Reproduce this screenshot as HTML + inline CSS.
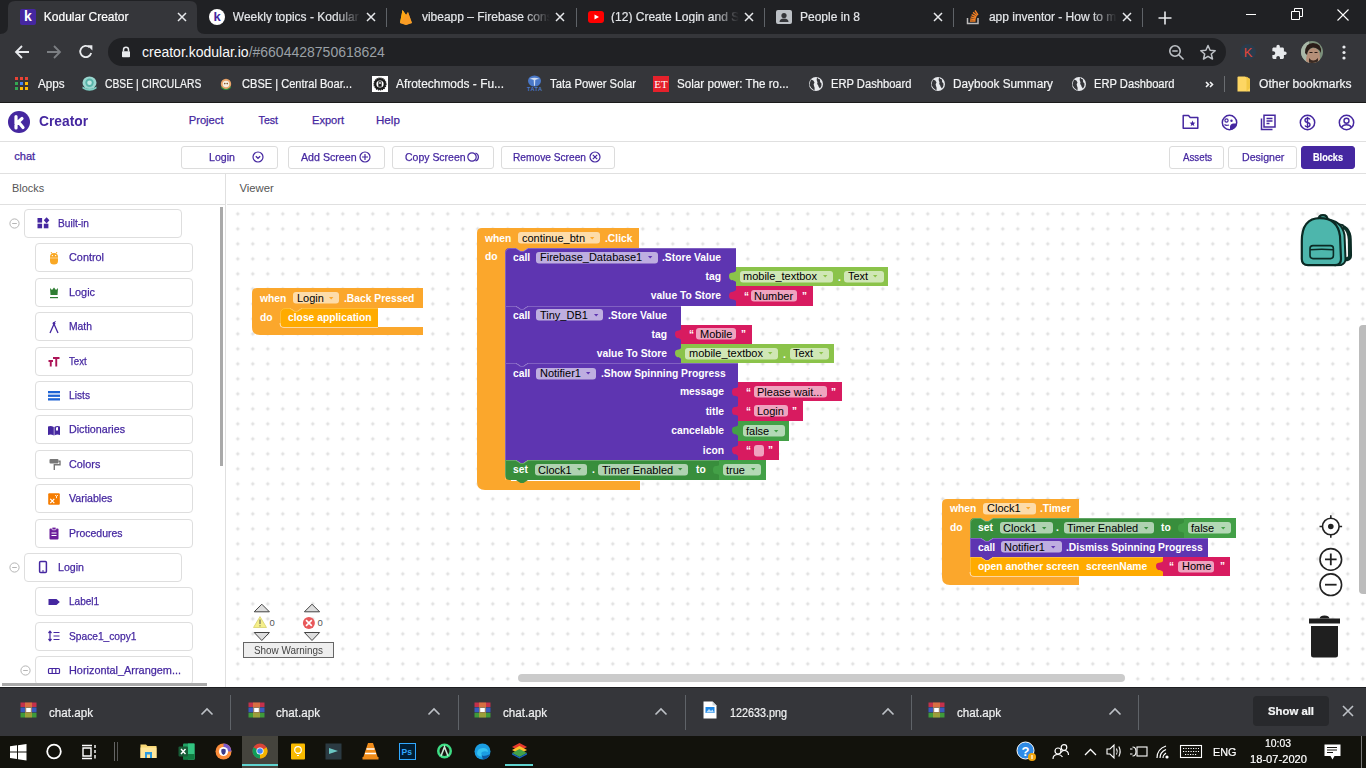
<!DOCTYPE html><html><head><meta charset="utf-8"><style>
*{box-sizing:border-box}
html,body{margin:0;padding:0}
body{width:1366px;height:768px;overflow:hidden;position:relative;background:#fff;font-family:"Liberation Sans",sans-serif}
.a{position:absolute}
.t{position:absolute;white-space:nowrap;line-height:1}
.k{-webkit-text-stroke:0.25px currentColor}
svg{position:absolute;overflow:visible}
</style></head><body><div class="a" style="left:0;top:0;width:1366px;height:34px;background:#202124"></div>
<div class="a" style="left:0;top:34px;width:1366px;height:68px;background:#35363a"></div>
<div class="a" style="left:0;top:102px;width:1366px;height:1px;background:#1a1a1a"></div>
<svg style="left:0;top:0" width="220" height="34"><path d="M0,34 Q8,34 8,26 L8,8 Q8,1 15,1 L190,1 Q197,1 197,8 L197,26 Q197,34 205,34 Z" fill="#35363a"/></svg>
<div class="a" style="left:20px;top:9px;width:16px;height:16px;background:#4527a0;border-radius:2px"></div>
<div class="t" style="left:20px;top:9px;font-size:14px;font-weight:bold;color:#fff;width:16px;text-align:center">k</div>
<div class="t" style="left:43.8px;top:11px;font-size:12px;color:#ffffff;width:128px;overflow:hidden;-webkit-text-stroke:0.2px currentColor;-webkit-mask-image:linear-gradient(90deg,#000 80%,transparent)">Kodular Creator</div>
<svg style="left:176.8px;top:12px" width="10" height="10"><path d="M1,1 L9,9 M9,1 L1,9" stroke="#e8eaed" stroke-width="1.5"/></svg>
<div class="a" style="left:209px;top:9px;width:16px;height:16px;background:#fff;border-radius:8px"></div>
<div class="t" style="left:209px;top:10px;font-size:13px;font-weight:bold;color:#4527a0;width:16px;text-align:center">k</div>
<div class="t" style="left:232.8px;top:11px;font-size:12px;color:#e3e5e8;width:128px;overflow:hidden;-webkit-text-stroke:0.2px currentColor;-webkit-mask-image:linear-gradient(90deg,#000 80%,transparent)">Weekly topics - Kodular Community</div>
<svg style="left:365.8px;top:12px" width="10" height="10"><path d="M1,1 L9,9 M9,1 L1,9" stroke="#e8eaed" stroke-width="1.5"/></svg>
<div class="a" style="left:386px;top:8px;width:1px;height:19px;background:#5f6368"></div>
<svg style="left:398px;top:9px" width="16" height="16"><path d="M2,14 L4.5,1 L8,6 L10,3 L14,14 L8,16 Z" fill="#ffc24a"/><path d="M2,14 L4.5,1 L8,6 Z" fill="#ffa611"/><path d="M2,14 L10,3 L14,14 L8,16Z" fill="#f6820c" opacity=".6"/></svg>
<div class="t" style="left:421.9px;top:11px;font-size:12px;color:#e3e5e8;width:128px;overflow:hidden;-webkit-text-stroke:0.2px currentColor;-webkit-mask-image:linear-gradient(90deg,#000 80%,transparent)">vibeapp – Firebase console</div>
<svg style="left:554.9px;top:12px" width="10" height="10"><path d="M1,1 L9,9 M9,1 L1,9" stroke="#e8eaed" stroke-width="1.5"/></svg>
<div class="a" style="left:576px;top:8px;width:1px;height:19px;background:#5f6368"></div>
<div class="a" style="left:588px;top:11px;width:16px;height:12px;background:#ff0000;border-radius:3px"></div>
<svg style="left:588px;top:11px" width="16" height="12"><path d="M6.5,3.5 L11,6 L6.5,8.5Z" fill="#fff"/></svg>
<div class="t" style="left:611.1px;top:11px;font-size:12px;color:#e3e5e8;width:128px;overflow:hidden;-webkit-text-stroke:0.2px currentColor;-webkit-mask-image:linear-gradient(90deg,#000 80%,transparent)">(12) Create Login and Sign Up</div>
<svg style="left:744.1px;top:12px" width="10" height="10"><path d="M1,1 L9,9 M9,1 L1,9" stroke="#e8eaed" stroke-width="1.5"/></svg>
<div class="a" style="left:764px;top:8px;width:1px;height:19px;background:#5f6368"></div>
<div class="a" style="left:776px;top:10px;width:16px;height:14px;background:#bdc1c6;border-radius:2px"></div>
<svg style="left:776px;top:10px" width="16" height="14"><circle cx="8" cy="5.5" r="2.6" fill="#35363a"/><path d="M3.5,12 Q3.5,8.5 8,8.5 Q12.5,8.5 12.5,12Z" fill="#35363a"/></svg>
<div class="t" style="left:800.0px;top:11px;font-size:12px;color:#e3e5e8;width:128px;overflow:hidden;-webkit-text-stroke:0.2px currentColor;-webkit-mask-image:linear-gradient(90deg,#000 80%,transparent)">People in 8</div>
<svg style="left:933.0px;top:12px" width="10" height="10"><path d="M1,1 L9,9 M9,1 L1,9" stroke="#e8eaed" stroke-width="1.5"/></svg>
<div class="a" style="left:953px;top:8px;width:1px;height:19px;background:#5f6368"></div>
<svg style="left:965px;top:9px" width="16" height="16"><path d="M2.5,9 V14.5 H13 V9" stroke="#bcbbbb" stroke-width="1.5" fill="none"/><path d="M5,12 H10.5 M5.2,10 L10.6,10.6 M5.7,7.9 L10.9,9.3 M6.6,5.6 L11.4,8 M8,3.4 L12.2,6.8 M10,1.5 L13,5.8" stroke="#f48024" stroke-width="1.4" fill="none"/></svg>
<div class="t" style="left:988.9px;top:11px;font-size:12px;color:#e3e5e8;width:128px;overflow:hidden;-webkit-text-stroke:0.2px currentColor;-webkit-mask-image:linear-gradient(90deg,#000 80%,transparent)">app inventor - How to make</div>
<svg style="left:1121.9px;top:12px" width="10" height="10"><path d="M1,1 L9,9 M9,1 L1,9" stroke="#e8eaed" stroke-width="1.5"/></svg>
<div class="a" style="left:1142px;top:8px;width:1px;height:19px;background:#5f6368"></div>
<svg style="left:1158px;top:11px" width="14" height="14"><path d="M7,0.5 V13.5 M0.5,7 H13.5" stroke="#e8eaed" stroke-width="1.6"/></svg>
<div class="a" style="left:1246px;top:14px;width:10px;height:1px;background:#fff"></div>
<svg style="left:1291px;top:8px" width="12" height="12"><path d="M0.5,3.5 H8.5 V11.5 H0.5 Z M3.5,3.5 V0.5 H11.5 V8.5 H8.5" stroke="#fff" stroke-width="1" fill="none"/></svg>
<svg style="left:1337px;top:9px" width="12" height="12"><path d="M0.5,0.5 L11.5,11.5 M11.5,0.5 L0.5,11.5" stroke="#fff" stroke-width="1.1"/></svg>
<svg style="left:14px;top:44px" width="16" height="16"><path d="M15,8 H2 M8,2 L2,8 L8,14" stroke="#e8eaed" stroke-width="1.8" fill="none"/></svg>
<svg style="left:46px;top:44px" width="16" height="16"><path d="M1,8 H14 M8,2 L14,8 L8,14" stroke="#7c7f83" stroke-width="1.8" fill="none"/></svg>
<svg style="left:78px;top:44px" width="16" height="16"><path d="M13.2,9 A5.6,5.6 0 1 1 11.6,3.4" stroke="#e8eaed" stroke-width="1.8" fill="none"/><path d="M9.2,1.2 L14.4,1.2 L14.4,6.4 Z" fill="#e8eaed"/></svg>
<div class="a" style="left:108px;top:38px;width:1118px;height:28px;background:#202124;border-radius:14px"></div>
<svg style="left:121px;top:46px" width="10" height="12"><path d="M2.5,5.5 V3.8 A2.5,2.5 0 0 1 7.5,3.8 V5.5" stroke="#e8eaed" stroke-width="1.5" fill="none"/><rect x="1" y="5.3" width="8" height="6" fill="#e8eaed" rx="0.8"/></svg>
<div class="t" style="left:142px;top:45px;font-size:14px;color:#fafafa">creator.kodular.io<span style="color:#9aa0a6">/#6604428750618624</span></div>
<svg style="left:1168px;top:44px" width="18" height="18"><circle cx="7" cy="7" r="5.2" stroke="#bdc1c6" stroke-width="1.6" fill="none"/><path d="M4.3,7 H9.7 M10.8,10.8 L15.5,15.5" stroke="#bdc1c6" stroke-width="1.6"/></svg>
<svg style="left:1199px;top:44px" width="18" height="18"><path d="M9,1.5 L11.1,6.3 L16.2,6.7 L12.3,10 L13.5,15 L9,12.3 L4.5,15 L5.7,10 L1.8,6.7 L6.9,6.3 Z" stroke="#bdc1c6" stroke-width="1.5" fill="none" stroke-linejoin="round"/></svg>
<div class="a" style="left:1240px;top:44px;width:16px;height:16px;border-radius:8px;background:#2a3c4c"></div>
<div class="t" style="left:1240px;top:46px;width:16px;text-align:center;font-size:13px;color:#e0463a">K</div>
<svg style="left:1271px;top:43.5px" width="17" height="17"><path transform="translate(0,0) scale(0.68)" d="M20.5 11H19V7c0-1.1-.9-2-2-2h-4V3.5C13 2.12 11.88 1 10.5 1S8 2.12 8 3.5V5H4c-1.1 0-1.99.9-1.99 2v3.8H3.5c1.49 0 2.7 1.210 2.7 2.7s-1.21 2.7-2.7 2.7H2V20c0 1.1.9 2 2 2h3.8v-1.5c0-1.49 1.21-2.7 2.7-2.7 1.49 0 2.7 1.21 2.7 2.7V22H17c1.1 0 2-.9 2-2v-4h1.5c1.38 0 2.5-1.12 2.5-2.5S21.880 11 20.5 11z" fill="#e8eaed"/></svg>
<svg style="left:1301px;top:41px" width="22" height="22"><defs><clipPath id="av"><circle cx="11" cy="11" r="11"/></clipPath></defs><g clip-path="url(#av)"><rect width="22" height="22" fill="#7b8f7a"/><rect x="0" y="0" width="8" height="22" fill="#a9b8a8"/><path d="M5,22 Q5,8 12,7 Q19,7 19,16 L19,22Z" fill="#b58f78"/><path d="M4,12 Q4,2 12,2 Q21,2 20,12 Q18,7 12,6.5 Q7,7 6,14Z" fill="#2a1d18"/><path d="M8,17 Q12,22 17,17 L17,22 H8Z" fill="#3a2a22"/><rect x="8.5" y="11" width="3" height="1" fill="#2a1d18"/><rect x="13.5" y="11" width="3" height="1" fill="#2a1d18"/></g></svg>
<svg style="left:1341px;top:45px" width="6" height="16"><circle cx="3" cy="2" r="1.6" fill="#e8eaed"/><circle cx="3" cy="7.5" r="1.6" fill="#e8eaed"/><circle cx="3" cy="13" r="1.6" fill="#e8eaed"/></svg>
<div class="a" style="left:15px;top:77px;width:3px;height:3px;background:#ea4335"></div>
<div class="a" style="left:20px;top:77px;width:3px;height:3px;background:#ea4335"></div>
<div class="a" style="left:25px;top:77px;width:3px;height:3px;background:#ea4335"></div>
<div class="a" style="left:15px;top:82px;width:3px;height:3px;background:#34a853"></div>
<div class="a" style="left:20px;top:82px;width:3px;height:3px;background:#4285f4"></div>
<div class="a" style="left:25px;top:82px;width:3px;height:3px;background:#fbbc05"></div>
<div class="a" style="left:15px;top:87px;width:3px;height:3px;background:#34a853"></div>
<div class="a" style="left:20px;top:87px;width:3px;height:3px;background:#fbbc05"></div>
<div class="a" style="left:25px;top:87px;width:3px;height:3px;background:#fbbc05"></div>
<div class="t" style="left:38.0px;top:78.0px;font-size:12.00px;color:#f4f5f6;font-weight:normal;-webkit-text-stroke:0.2px #f4f5f6;transform:scaleX(0.9722);transform-origin:0 50%;">Apps</div>
<svg style="left:81px;top:76px" width="17" height="16"><ellipse cx="8.5" cy="6.8" rx="7" ry="6.3" fill="#9ad7cf"/><circle cx="8.5" cy="6.8" r="4.2" fill="#57b3a8"/><circle cx="8.5" cy="6.8" r="2.3" fill="#bfe7e1"/><path d="M1.5,10.5 Q8.5,15 15.5,10.5 L15.5,12.5 Q8.5,17 1.5,12.5Z" fill="#7fcfc4"/></svg>
<div class="t" style="left:105.0px;top:78.0px;font-size:12.00px;color:#f4f5f6;font-weight:normal;-webkit-text-stroke:0.2px #f4f5f6;transform:scaleX(0.8613);transform-origin:0 50%;">CBSE | CIRCULARS</div>
<svg style="left:220px;top:78px" width="12" height="13"><circle cx="6" cy="6" r="5.2" fill="#e9a46a"/><circle cx="6" cy="6" r="3.3" fill="#f6eee0"/><circle cx="4.8" cy="5.6" r=".8" fill="#7a4a20"/><circle cx="7.2" cy="5.6" r=".8" fill="#7a4a20"/><path d="M1.2,8.5 Q6,13.5 10.8,8.5 L10.8,10 Q6,14 1.2,10Z" fill="#2e9a3e"/></svg>
<div class="t" style="left:241.7px;top:78.0px;font-size:12.00px;color:#f4f5f6;font-weight:normal;-webkit-text-stroke:0.2px #f4f5f6;transform:scaleX(0.9230);transform-origin:0 50%;">CBSE | Central Boar...</div>
<svg style="left:372px;top:76px" width="16" height="16"><rect width="16" height="16" fill="#fff"/><circle cx="8" cy="8" r="6" fill="#1a1a1a" stroke="#1a1a1a" stroke-width="1.2" stroke-dasharray="1.2,.8"/><circle cx="8" cy="8" r="3.6" fill="#fff"/><rect x="6.3" y="5.2" width="3.4" height="5.6" rx=".6" fill="#1a1a1a"/><rect x="7.2" y="6.2" width="1.6" height="1.6" fill="#fff"/></svg>
<div class="t" style="left:395.6px;top:78.0px;font-size:12.00px;color:#f4f5f6;font-weight:normal;-webkit-text-stroke:0.2px #f4f5f6;transform:scaleX(0.9935);transform-origin:0 50%;">Afrotechmods - Fu...</div>
<svg style="left:526px;top:75px" width="17" height="17"><ellipse cx="8.5" cy="6" rx="6.5" ry="5.5" fill="#4a78c8"/><path d="M3.5,4 Q8.5,1.5 13.5,4 Q11,4 9.3,5 L9,10.8 H8 L7.7,5 Q6,4 3.5,4Z" fill="#cfdcf2"/><text x="1" y="16.2" font-size="5.6" font-weight="bold" fill="#4a78c8" font-family="Liberation Sans" textLength="15">TATA</text></svg>
<div class="t" style="left:550.0px;top:78.0px;font-size:12.00px;color:#f4f5f6;font-weight:normal;-webkit-text-stroke:0.2px #f4f5f6;transform:scaleX(0.9410);transform-origin:0 50%;">Tata Power Solar</div>
<div class="a" style="left:653px;top:76px;width:16px;height:16px;background:#e5212b"></div>
<div class="t" style="left:653px;top:79px;width:16px;text-align:center;font-family:'Liberation Serif';font-size:11px;color:#fff">ET</div>
<div class="t" style="left:676.6px;top:78.0px;font-size:12.00px;color:#f4f5f6;font-weight:normal;-webkit-text-stroke:0.2px #f4f5f6;transform:scaleX(0.9707);transform-origin:0 50%;">Solar power: The ro...</div>
<svg style="left:808px;top:76px" width="16" height="16"><circle cx="8" cy="8" r="7" fill="#e8eaed"/><path d="M3,3.5 Q6,4 6.5,6.5 Q5,8 6,10 Q7,11 6.5,14.5 Q3,13 1.5,9 Q2,6 3,3.5Z M9,1.3 Q10,3 12,3.5 Q11.5,6 13.5,7.5 Q14,10 12,12.5 Q10.5,11 10,9 Q8.5,8 9.5,6.5 Q8,5 9,1.3Z" fill="#35363a"/></svg>
<div class="t" style="left:831.0px;top:78.0px;font-size:12.00px;color:#f4f5f6;font-weight:normal;-webkit-text-stroke:0.2px #f4f5f6;transform:scaleX(0.9306);transform-origin:0 50%;">ERP Dashboard</div>
<svg style="left:930px;top:76px" width="16" height="16"><circle cx="8" cy="8" r="7" fill="#e8eaed"/><path d="M3,3.5 Q6,4 6.5,6.5 Q5,8 6,10 Q7,11 6.5,14.5 Q3,13 1.5,9 Q2,6 3,3.5Z M9,1.3 Q10,3 12,3.5 Q11.5,6 13.5,7.5 Q14,10 12,12.5 Q10.5,11 10,9 Q8.5,8 9.5,6.5 Q8,5 9,1.3Z" fill="#35363a"/></svg>
<div class="t" style="left:953.0px;top:78.0px;font-size:12.00px;color:#f4f5f6;font-weight:normal;-webkit-text-stroke:0.2px #f4f5f6;transform:scaleX(0.9799);transform-origin:0 50%;">Daybook Summary</div>
<svg style="left:1071px;top:76px" width="16" height="16"><circle cx="8" cy="8" r="7" fill="#e8eaed"/><path d="M3,3.5 Q6,4 6.5,6.5 Q5,8 6,10 Q7,11 6.5,14.5 Q3,13 1.5,9 Q2,6 3,3.5Z M9,1.3 Q10,3 12,3.5 Q11.5,6 13.5,7.5 Q14,10 12,12.5 Q10.5,11 10,9 Q8.5,8 9.5,6.5 Q8,5 9,1.3Z" fill="#35363a"/></svg>
<div class="t" style="left:1094.0px;top:78.0px;font-size:12.00px;color:#f4f5f6;font-weight:normal;-webkit-text-stroke:0.2px #f4f5f6;transform:scaleX(0.9306);transform-origin:0 50%;">ERP Dashboard</div>
<svg style="left:1237px;top:76px" width="14" height="16"><path d="M0.5,1.5 Q0.5,0.5 1.5,0.5 H8 L13,3 V15.5 H0.5 Z" fill="#fdd663"/><path d="M9.5,0.5 V15.5 L13,12 V3Z" fill="#f2c744"/></svg>
<div class="t" style="left:1258.5px;top:78.0px;font-size:12.00px;color:#f4f5f6;font-weight:normal;-webkit-text-stroke:0.2px #f4f5f6;transform:scaleX(1.0060);transform-origin:0 50%;">Other bookmarks</div>
<svg style="left:1205px;top:80.5px" width="10" height="7"><path d="M1,1 L3.5,3.5 L1,6 M5,1 L7.5,3.5 L5,6" stroke="#f4f5f6" stroke-width="1.6" fill="none"/></svg>
<div class="a" style="left:1224px;top:76px;width:1px;height:16px;background:#6a6d71"></div>
<div class="a" style="left:0;top:141px;width:1366px;height:1px;background:#e0e0e0"></div>
<div class="a" style="left:0;top:173px;width:1366px;height:1px;background:#e0e0e0"></div>
<div class="a" style="left:0;top:204px;width:225px;height:1px;background:#e0e0e0"></div>
<div class="a" style="left:227px;top:204px;width:1139px;height:1px;background:#e0e0e0"></div>
<div class="a" style="left:225px;top:174px;width:1px;height:513px;background:#e0e0e0"></div>
<div class="a" style="left:8px;top:111px;width:22px;height:22px;border-radius:11px;background:#4527a0"></div>
<svg style="left:8px;top:111px" width="22" height="22"><path d="M8,5.5 V17 M8,13 L14,7.5 M10.5,11 L15,16.5" stroke="#fff" stroke-width="3.2" stroke-linecap="round" fill="none"/></svg>
<div class="t" style="left:38.5px;top:113.8px;font-size:14.00px;color:#4527a0;font-weight:bold;transform:scaleX(0.9840);transform-origin:0 50%;">Creator</div>
<div class="t" style="left:188.7px;top:114.9px;font-size:11.20px;color:#4527a0;font-weight:normal;-webkit-text-stroke:0.25px #4527a0;">Project</div>
<div class="t" style="left:258.6px;top:115.2px;font-size:10.60px;color:#4527a0;font-weight:normal;-webkit-text-stroke:0.25px #4527a0;">Test</div>
<div class="t" style="left:312.0px;top:115.0px;font-size:11.10px;color:#4527a0;font-weight:normal;-webkit-text-stroke:0.25px #4527a0;">Export</div>
<div class="t" style="left:376.0px;top:113.9px;font-size:11.60px;color:#4527a0;font-weight:normal;-webkit-text-stroke:0.25px #4527a0;">Help</div>
<svg style="left:1182px;top:114px" width="18" height="16"><path d="M1.2,1.5 H6.5 L8.2,3.5 H15.8 V14.2 H1.2 Z" stroke="#4527a0" stroke-width="1.5" fill="none" stroke-linejoin="round"/><path d="M10.5,6.5 L11.3,8.6 L13.4,8.7 L11.8,10 L12.3,12.1 L10.5,11 L8.7,12.1 L9.2,10 L7.6,8.7 L9.7,8.6Z" fill="#4527a0"/></svg>
<svg style="left:1221px;top:114px" width="17" height="17"><circle cx="8.5" cy="8.5" r="7.2" stroke="#4527a0" stroke-width="1.5" fill="none"/><circle cx="5.5" cy="6.5" r="1.6" stroke="#4527a0" stroke-width="1.2" fill="none"/><circle cx="10.5" cy="6.8" r="1.2" fill="#4527a0"/><path d="M9,15.5 A6,6 0 0 0 15.5,9.5 L12,9.5 Q9,10 9,13 Z" fill="#4527a0"/><path d="M3.5,10.5 Q5,12 8,11" stroke="#4527a0" stroke-width="1.2" fill="none"/></svg>
<svg style="left:1260px;top:114px" width="17" height="17"><path d="M1.5,4.5 V15.5 H12.5" stroke="#4527a0" stroke-width="1.5" fill="none"/><path d="M4,2 V13 H15 V1.2 H4 Z" stroke="#4527a0" stroke-width="1.5" fill="none"/><path d="M6.5,4.5 H12.5 M6.5,7 H12.5 M6.5,9.5 H9.5" stroke="#4527a0" stroke-width="1.3"/></svg>
<svg style="left:1299px;top:114px" width="17" height="17"><circle cx="8.5" cy="8.5" r="7.2" stroke="#4527a0" stroke-width="1.5" fill="none"/><path d="M11,5.5 Q10.5,4.2 8.5,4.2 Q6,4.2 6,6.2 Q6,8 8.5,8.5 Q11,9 11,10.8 Q11,12.8 8.5,12.8 Q6.5,12.8 6,11.5 M8.5,2.8 V14.2" stroke="#4527a0" stroke-width="1.4" fill="none"/></svg>
<svg style="left:1338px;top:114px" width="17" height="17"><circle cx="8.5" cy="8.5" r="7.2" stroke="#4527a0" stroke-width="1.5" fill="none"/><circle cx="8.5" cy="6.8" r="2.5" stroke="#4527a0" stroke-width="1.4" fill="none"/><path d="M3.5,13.5 Q5,10.8 8.5,10.8 Q12,10.8 13.5,13.5" stroke="#4527a0" stroke-width="1.4" fill="none"/></svg>
<div class="t" style="left:14.2px;top:151.4px;font-size:11.10px;color:#4527a0;font-weight:normal;-webkit-text-stroke:0.25px #4527a0;">chat</div>
<div class="a" style="left:181.0px;top:146px;width:96.5px;height:23px;border:1px solid #dcdcdc;border-radius:3px;background:#fff"></div>
<div class="t" style="left:208.7px;top:151.5px;font-size:11.00px;color:#4527a0;font-weight:normal;-webkit-text-stroke:0.25px #4527a0;transform:scaleX(0.9658);transform-origin:0 50%;">Login</div>
<svg style="left:252px;top:151px" width="12" height="12"><circle cx="6" cy="6" r="5" stroke="#4527a0" stroke-width="1.2" fill="none"/><path d="M3.8,5.2 L6,7.3 L8.2,5.2" stroke="#4527a0" stroke-width="1.2" fill="none"/></svg>
<div class="a" style="left:288.0px;top:146px;width:96.5px;height:23px;border:1px solid #dcdcdc;border-radius:3px;background:#fff"></div>
<div class="t" style="left:300.6px;top:151.5px;font-size:11.00px;color:#4527a0;font-weight:normal;-webkit-text-stroke:0.25px #4527a0;transform:scaleX(0.9672);transform-origin:0 50%;">Add Screen</div>
<svg style="left:359px;top:151px" width="12" height="12"><circle cx="6" cy="6" r="5" stroke="#4527a0" stroke-width="1.2" fill="none"/><path d="M6,3 V9 M3,6 H9" stroke="#4527a0" stroke-width="1.2"/></svg>
<div class="a" style="left:392.0px;top:146px;width:101.6px;height:23px;border:1px solid #dcdcdc;border-radius:3px;background:#fff"></div>
<div class="t" style="left:404.7px;top:151.5px;font-size:11.00px;color:#4527a0;font-weight:normal;-webkit-text-stroke:0.25px #4527a0;transform:scaleX(0.9529);transform-origin:0 50%;">Copy Screen</div>
<svg style="left:467px;top:151px" width="14" height="12"><circle cx="5" cy="6" r="4.2" stroke="#4527a0" stroke-width="1.2" fill="none"/><path d="M8.5,2 A4.2,4.2 0 0 1 8.5,10" stroke="#4527a0" stroke-width="1.2" fill="none"/></svg>
<div class="a" style="left:501.0px;top:146px;width:113.8px;height:23px;border:1px solid #dcdcdc;border-radius:3px;background:#fff"></div>
<div class="t" style="left:513.4px;top:151.5px;font-size:11.00px;color:#4527a0;font-weight:normal;-webkit-text-stroke:0.25px #4527a0;transform:scaleX(0.9255);transform-origin:0 50%;">Remove Screen</div>
<svg style="left:589px;top:151px" width="12" height="12"><circle cx="6" cy="6" r="5" stroke="#4527a0" stroke-width="1.2" fill="none"/><path d="M3.8,3.8 L8.2,8.2 M8.2,3.8 L3.8,8.2" stroke="#4527a0" stroke-width="1.2"/></svg>
<div class="a" style="left:1169.3px;top:146px;width:55.2px;height:23px;border:1px solid #dcdcdc;border-radius:3px;background:#fff"></div>
<div class="t" style="left:1182.9px;top:151.5px;font-size:11.00px;color:#4527a0;font-weight:normal;-webkit-text-stroke:0.25px #4527a0;transform:scaleX(0.8844);transform-origin:0 50%;">Assets</div>
<div class="a" style="left:1228.3px;top:146px;width:68.3px;height:23px;border:1px solid #dcdcdc;border-radius:3px;background:#fff"></div>
<div class="t" style="left:1241.7px;top:151.5px;font-size:11.00px;color:#4527a0;font-weight:normal;-webkit-text-stroke:0.25px #4527a0;transform:scaleX(0.9630);transform-origin:0 50%;">Designer</div>
<div class="a" style="left:1301.0px;top:146px;width:54.0px;height:23px;border:1px solid #4527a0;border-radius:3px;background:#4527a0"></div>
<div class="t" style="left:1313.3px;top:151.6px;font-size:10.80px;color:#fff;font-weight:bold;-webkit-text-stroke:0.2px #fff;transform:scaleX(0.8473);transform-origin:0 50%;">Blocks</div>
<div class="t" style="left:12.0px;top:182.6px;font-size:10.90px;color:#555;font-weight:normal;">Blocks</div>
<div class="t" style="left:239.5px;top:183.2px;font-size:11.30px;color:#555;font-weight:normal;">Viewer</div>
<div class="a" style="left:0;top:205px;width:225px;height:482px;overflow:hidden">
<div class="a" style="left:24.3px;top:3.9px;width:157.3px;height:29px;border:1px solid #dedede;border-radius:4px;background:#fff"></div>
<svg style="left:8.5px;top:12.9px" width="11" height="11"><circle cx="5.5" cy="5.5" r="4.6" stroke="#b5b5b5" stroke-width="1" fill="none"/><path d="M3.2,5.5 H7.8" stroke="#b5b5b5" stroke-width="1"/></svg>
<div class="t" style="left:57.5px;top:12.9px;font-size:11.00px;color:#4527a0;font-weight:normal;-webkit-text-stroke:0.25px #4527a0;transform:scaleX(0.9219);transform-origin:0 50%;">Built-in</div>
<svg style="left:35.5px;top:11.4px" width="14" height="14"><rect x="1.5" y="2" width="4.6" height="4.6" fill="#4527a0"/><path d="M10.6,1.2 L13.4,4.3 L10.6,7.4 L7.8,4.3Z" fill="#4527a0"/><rect x="1.5" y="7.7" width="4.6" height="4.6" fill="#4527a0"/><rect x="7.8" y="7.7" width="4.6" height="4.6" fill="#4527a0"/></svg>
<div class="a" style="left:35.2px;top:38.3px;width:157.8px;height:29px;border:1px solid #dedede;border-radius:4px;background:#fff"></div>
<div class="t" style="left:68.5px;top:47.3px;font-size:11.00px;color:#4527a0;font-weight:normal;-webkit-text-stroke:0.25px #4527a0;transform:scaleX(0.9868);transform-origin:0 50%;">Control</div>
<svg style="left:47.0px;top:45.8px" width="14" height="14"><path d="M3,6 Q3,2 7,2 Q11,2 11,6 V10 Q11,13.5 7,13.5 Q3,13.5 3,10Z" fill="#f9a825"/><path d="M4,1 L5,2.5 M10,1 L9,2.5" stroke="#f9a825" stroke-width="1"/><rect x="3" y="6.6" width="8" height="0.8" fill="#fff" opacity=".6"/><circle cx="5.4" cy="4.6" r=".7" fill="#fff"/><circle cx="8.6" cy="4.6" r=".7" fill="#fff"/></svg>
<div class="a" style="left:35.2px;top:72.7px;width:157.8px;height:29px;border:1px solid #dedede;border-radius:4px;background:#fff"></div>
<div class="t" style="left:68.5px;top:81.7px;font-size:11.00px;color:#4527a0;font-weight:normal;-webkit-text-stroke:0.25px #4527a0;transform:scaleX(0.9887);transform-origin:0 50%;">Logic</div>
<svg style="left:47.0px;top:80.2px" width="14" height="14"><path d="M3,3 L5,5 L7,2.5 L9,5 L11,3 L10.5,10 H3.5Z" fill="#2e7d32"/><rect x="3" y="12" width="8" height="1.2" fill="#2e7d32"/></svg>
<div class="a" style="left:35.2px;top:107.1px;width:157.8px;height:29px;border:1px solid #dedede;border-radius:4px;background:#fff"></div>
<div class="t" style="left:68.5px;top:116.1px;font-size:11.00px;color:#4527a0;font-weight:normal;-webkit-text-stroke:0.25px #4527a0;transform:scaleX(0.9400);transform-origin:0 50%;">Math</div>
<svg style="left:47.0px;top:114.6px" width="14" height="14"><path d="M3,13 L7,4 L11,13" stroke="#4527a0" stroke-width="1.3" fill="none"/><circle cx="7" cy="3.5" r="1.4" fill="#4527a0"/><path d="M7,3 L8.5,1" stroke="#4527a0" stroke-width="1"/></svg>
<div class="a" style="left:35.2px;top:141.5px;width:157.8px;height:29px;border:1px solid #dedede;border-radius:4px;background:#fff"></div>
<div class="t" style="left:68.5px;top:150.5px;font-size:11.00px;color:#4527a0;font-weight:normal;-webkit-text-stroke:0.25px #4527a0;transform:scaleX(0.8768);transform-origin:0 50%;">Text</div>
<svg style="left:47.0px;top:149.0px" width="14" height="14"><path d="M1.5,7 H6 M3.75,7 V12.5 M6,4 H12.5 M9.25,4 V12.5" stroke="#ad1457" stroke-width="1.9" fill="none"/></svg>
<div class="a" style="left:35.2px;top:175.9px;width:157.8px;height:29px;border:1px solid #dedede;border-radius:4px;background:#fff"></div>
<div class="t" style="left:68.5px;top:184.9px;font-size:11.00px;color:#4527a0;font-weight:normal;-webkit-text-stroke:0.25px #4527a0;transform:scaleX(0.9282);transform-origin:0 50%;">Lists</div>
<svg style="left:47.0px;top:183.4px" width="14" height="14"><rect x="1" y="3" width="12" height="2.3" fill="#1e63d4"/><rect x="1" y="6.6" width="12" height="2.3" fill="#1e63d4"/><rect x="1" y="10.2" width="12" height="2.3" fill="#1e63d4"/></svg>
<div class="a" style="left:35.2px;top:210.3px;width:157.8px;height:29px;border:1px solid #dedede;border-radius:4px;background:#fff"></div>
<div class="t" style="left:68.5px;top:219.3px;font-size:11.00px;color:#4527a0;font-weight:normal;-webkit-text-stroke:0.25px #4527a0;transform:scaleX(0.9744);transform-origin:0 50%;">Dictionaries</div>
<svg style="left:47.0px;top:217.8px" width="14" height="14"><path d="M1,3.5 Q4,2.5 6.8,4 V12.5 Q4,11 1,12Z M7.4,4 Q10,2.5 13,3.5 V12 Q10,11 7.4,12.5Z" fill="#4527a0"/><path d="M9,4.5 V8 L10,7 L11,8 V4" fill="#fff"/></svg>
<div class="a" style="left:35.2px;top:244.7px;width:157.8px;height:29px;border:1px solid #dedede;border-radius:4px;background:#fff"></div>
<div class="t" style="left:68.5px;top:253.7px;font-size:11.00px;color:#4527a0;font-weight:normal;-webkit-text-stroke:0.25px #4527a0;transform:scaleX(0.9844);transform-origin:0 50%;">Colors</div>
<svg style="left:47.0px;top:252.2px" width="14" height="14"><rect x="2.5" y="2" width="9" height="4.5" rx="1" fill="#777"/><path d="M11.5,4.2 H13 V7.8 H7.3 V13" stroke="#777" stroke-width="1.4" fill="none"/></svg>
<div class="a" style="left:35.2px;top:279.1px;width:157.8px;height:29px;border:1px solid #dedede;border-radius:4px;background:#fff"></div>
<div class="t" style="left:68.5px;top:288.1px;font-size:11.00px;color:#4527a0;font-weight:normal;-webkit-text-stroke:0.25px #4527a0;transform:scaleX(0.9634);transform-origin:0 50%;">Variables</div>
<svg style="left:47.0px;top:286.6px" width="14" height="14"><rect x="1.2" y="1.2" width="11.6" height="11.6" rx="1" fill="#f57c00"/><path d="M3.3,6.8 L7.3,11.2 M7.3,6.8 L3.3,11.2" stroke="#fff" stroke-width="1.2"/><path d="M8.3,3 L9.5,4.6 L10.8,3 M9.5,4.6 V6.2" stroke="#fff" stroke-width=".9" fill="none"/></svg>
<div class="a" style="left:35.2px;top:313.5px;width:157.8px;height:29px;border:1px solid #dedede;border-radius:4px;background:#fff"></div>
<div class="t" style="left:68.5px;top:322.5px;font-size:11.00px;color:#4527a0;font-weight:normal;-webkit-text-stroke:0.25px #4527a0;transform:scaleX(0.9526);transform-origin:0 50%;">Procedures</div>
<svg style="left:47.0px;top:321.0px" width="14" height="14"><rect x="2.5" y="2.5" width="9" height="11" rx="1" fill="#6a1b9a"/><rect x="5" y="1.2" width="4" height="2.6" rx=".8" fill="#6a1b9a" stroke="#fff" stroke-width=".7"/><path d="M4.5,7 H9.5 M4.5,9.5 H9.5" stroke="#fff" stroke-width="1"/></svg>
<div class="a" style="left:24.3px;top:347.9px;width:157.3px;height:29px;border:1px solid #dedede;border-radius:4px;background:#fff"></div>
<svg style="left:8.5px;top:356.9px" width="11" height="11"><circle cx="5.5" cy="5.5" r="4.6" stroke="#b5b5b5" stroke-width="1" fill="none"/><path d="M3.2,5.5 H7.8" stroke="#b5b5b5" stroke-width="1"/></svg>
<div class="t" style="left:57.5px;top:356.9px;font-size:11.00px;color:#4527a0;font-weight:normal;-webkit-text-stroke:0.25px #4527a0;transform:scaleX(0.9658);transform-origin:0 50%;">Login</div>
<svg style="left:35.5px;top:355.4px" width="14" height="14"><rect x="3.6" y="1.5" width="6.8" height="11" rx="1" stroke="#4527a0" stroke-width="1.5" fill="none"/><path d="M6,11 H8" stroke="#4527a0" stroke-width="1"/></svg>
<div class="a" style="left:35.2px;top:382.3px;width:157.8px;height:29px;border:1px solid #dedede;border-radius:4px;background:#fff"></div>
<div class="t" style="left:68.5px;top:391.3px;font-size:11.00px;color:#4527a0;font-weight:normal;-webkit-text-stroke:0.25px #4527a0;transform:scaleX(0.9139);transform-origin:0 50%;">Label1</div>
<svg style="left:47.0px;top:389.8px" width="14" height="14"><path d="M1.5,4 H9.5 L12.8,7 L9.5,10 H1.5Z" fill="#4527a0"/></svg>
<div class="a" style="left:35.2px;top:416.7px;width:157.8px;height:29px;border:1px solid #dedede;border-radius:4px;background:#fff"></div>
<div class="t" style="left:68.5px;top:425.7px;font-size:11.00px;color:#4527a0;font-weight:normal;-webkit-text-stroke:0.25px #4527a0;transform:scaleX(0.9274);transform-origin:0 50%;">Space1_copy1</div>
<svg style="left:47.0px;top:424.2px" width="14" height="14"><path d="M3,2.5 V11.5 M1.5,4 L3,2.2 L4.5,4 M1.5,10 L3,11.8 L4.5,10 M6.5,3.5 H12.5 M6.5,7 H12.5 M6.5,10.5 H12.5" stroke="#4527a0" stroke-width="1.2" fill="none"/></svg>
<div class="a" style="left:35.2px;top:451.1px;width:157.8px;height:29px;border:1px solid #dedede;border-radius:4px;background:#fff"></div>
<svg style="left:20.2px;top:460.1px" width="11" height="11"><circle cx="5.5" cy="5.5" r="4.6" stroke="#b5b5b5" stroke-width="1" fill="none"/><path d="M3.2,5.5 H7.8" stroke="#b5b5b5" stroke-width="1"/></svg>
<div class="t" style="left:68.5px;top:460.1px;font-size:11.00px;color:#4527a0;font-weight:normal;-webkit-text-stroke:0.25px #4527a0;transform:scaleX(0.9902);transform-origin:0 50%;">Horizontal_Arrangem...</div>
<svg style="left:47.0px;top:458.6px" width="14" height="14"><rect x="1.5" y="4.5" width="11" height="5" rx="1" stroke="#4527a0" stroke-width="1.2" fill="none"/><path d="M5.2,4.5 V9.5 M8.8,4.5 V9.5" stroke="#4527a0" stroke-width="1.2"/></svg>
</div>
<div class="a" style="left:220px;top:207px;width:3px;height:259px;background:#a9a9a9"></div>
<div class="a" style="left:2px;top:683px;width:205px;height:3px;background:#a9a9a9"></div>
<svg style="left:0;top:0;font-family:Liberation Sans" width="1366" height="768"><defs><pattern id="grid" x="230.3" y="206.4" width="15" height="15" patternUnits="userSpaceOnUse"><path d="M5.7,7.5 H9.3 M7.5,5.7 V9.3" stroke="#e0e0e0" stroke-width="1.4"/></pattern><clipPath id="cv"><rect x="226" y="205" width="1140" height="482"/></clipPath></defs><g clip-path="url(#cv)"><rect x="226" y="205" width="1140" height="482" fill="url(#grid)"/><path d="M252,293 Q252,288 257,288 L423,288 L423,308 L302,308 l-4.5,3 l-3,0 l-4.5,-3 L286,308 L286,327 L423,327 L423,335 L260,335 Q252,335 252,327 Z" fill="#fba72c"/><text x="260" y="302" font-size="10.3" font-weight="bold" fill="#fff" text-anchor="start">when</text><rect x="293" y="292" width="46" height="11.5" rx="3" fill="#fff" fill-opacity="0.6"/><text x="297" y="302" font-size="11" fill="#000">Login</text><path d="M329,297 l4.4,0 l-2.2,2.4 Z" fill="#fba72c"/><text x="344" y="302" font-size="10.3" font-weight="bold" fill="#fff" text-anchor="start">.Back Pressed</text><text x="260" y="321" font-size="10.3" font-weight="bold" fill="#fff" text-anchor="start">do</text><path d="M280,313 Q280,308 285,308 L290,308 l4.5,3 l3,0 l4.5,-3 L378,308 L378,327 L285,327 Q280,327 280,322 Z" fill="#ffab00"/><path d="M280.5,327 L280.5,313.5 Q280.5,308.5 285.5,308.5 L290.0,308.5 l4.5,3 l3,0 l4.5,-3 L378,308.5" stroke="#fff" stroke-opacity="0.22" stroke-width="1" fill="none"/><text x="288" y="321" font-size="10.3" font-weight="bold" fill="#fff" text-anchor="start">close application</text><path d="M280,323 Q280,327.5 284,327.5 L378,327.5" stroke="#fff" stroke-opacity="0.55" stroke-width="1" fill="none"/><path d="M477,233 Q477,228 482,228 L639,228 L639,248 L528,248 l-4.5,3 l-3,0 l-4.5,-3 L511,248 L511,481 L640,481 L640,490 L485,490 Q477,490 477,482 Z" fill="#fba72c"/><text x="485" y="242" font-size="10.3" font-weight="bold" fill="#fff" text-anchor="start">when</text><rect x="518" y="232" width="82" height="11.5" rx="3" fill="#fff" fill-opacity="0.6"/><text x="522" y="242" font-size="11" fill="#000">continue_btn</text><path d="M590,237 l4.4,0 l-2.2,2.4 Z" fill="#fba72c"/><text x="605" y="242" font-size="10.3" font-weight="bold" fill="#fff" text-anchor="start">.Click</text><text x="485" y="260" font-size="10.3" font-weight="bold" fill="#fff" text-anchor="start">do</text><path d="M505,253 Q505,248 510,248 L516,248 l4.5,3 l3,0 l4.5,-3 L736,248 L736,306 L528,306 l-4.5,3 l-3,0 l-4.5,-3 L505,306 Z" fill="#5e35b1"/><path d="M505.5,306 L505.5,253.5 Q505.5,248.5 510.5,248.5 L516.0,248.5 l4.5,3 l3,0 l4.5,-3 L736,248.5" stroke="#fff" stroke-opacity="0.22" stroke-width="1" fill="none"/><text x="513" y="261" font-size="10.3" font-weight="bold" fill="#fff" text-anchor="start">call</text><rect x="536" y="252" width="122" height="11.5" rx="3" fill="#fff" fill-opacity="0.6"/><text x="540" y="261" font-size="11" fill="#000">Firebase_Database1</text><path d="M648,256 l4.4,0 l-2.2,2.4 Z" fill="#5e35b1"/><text x="662" y="261" font-size="10.3" font-weight="bold" fill="#fff" text-anchor="start">.Store Value</text><text x="721" y="280" font-size="10.3" font-weight="bold" fill="#fff" text-anchor="end">tag</text><text x="721" y="299" font-size="10.3" font-weight="bold" fill="#fff" text-anchor="end">value To Store</text><path d="M505,306 L516,306 l4.5,3 l3,0 l4.5,-3 L681,306 L681,363 L528,363 l-4.5,3 l-3,0 l-4.5,-3 L505,363 Z" fill="#5e35b1"/><path d="M505.5,363 L505.5,306.5 L516.0,306.5 l4.5,3 l3,0 l4.5,-3 L681,306.5" stroke="#fff" stroke-opacity="0.22" stroke-width="1" fill="none"/><text x="513" y="319" font-size="10.3" font-weight="bold" fill="#fff" text-anchor="start">call</text><rect x="536" y="309" width="67" height="11.5" rx="3" fill="#fff" fill-opacity="0.6"/><text x="540" y="319" font-size="11" fill="#000">Tiny_DB1</text><path d="M594,314 l4.4,0 l-2.2,2.4 Z" fill="#5e35b1"/><text x="608" y="319" font-size="10.3" font-weight="bold" fill="#fff" text-anchor="start">.Store Value</text><text x="667" y="338" font-size="10.3" font-weight="bold" fill="#fff" text-anchor="end">tag</text><text x="667" y="357" font-size="10.3" font-weight="bold" fill="#fff" text-anchor="end">value To Store</text><path d="M505,363 L516,363 l4.5,3 l3,0 l4.5,-3 L738,363 L738,460 L528,460 l-4.5,3 l-3,0 l-4.5,-3 L505,460 Z" fill="#5e35b1"/><path d="M505.5,460 L505.5,363.5 L516.0,363.5 l4.5,3 l3,0 l4.5,-3 L738,363.5" stroke="#fff" stroke-opacity="0.22" stroke-width="1" fill="none"/><text x="513" y="377" font-size="10.3" font-weight="bold" fill="#fff" text-anchor="start">call</text><rect x="536" y="368" width="60" height="11.5" rx="3" fill="#fff" fill-opacity="0.6"/><text x="540" y="377" font-size="11" fill="#000">Notifier1</text><path d="M586,372 l4.4,0 l-2.2,2.4 Z" fill="#5e35b1"/><text x="601" y="377" font-size="10.3" font-weight="bold" fill="#fff" text-anchor="start">.Show Spinning Progress</text><text x="724" y="395" font-size="10.3" font-weight="bold" fill="#fff" text-anchor="end">message</text><text x="724" y="415" font-size="10.3" font-weight="bold" fill="#fff" text-anchor="end">title</text><text x="724" y="434" font-size="10.3" font-weight="bold" fill="#fff" text-anchor="end">cancelable</text><text x="724" y="454" font-size="10.3" font-weight="bold" fill="#fff" text-anchor="end">icon</text><path d="M505,460 L516,460 l4.5,3 l3,0 l4.5,-3 L766,460 L766,480 L528,480 l-4.5,3 l-3,0 l-4.5,-3 L510,480 Q505,480 505,475 Z" fill="#388e3c"/><path d="M505.5,480 L505.5,460.5 L516.0,460.5 l4.5,3 l3,0 l4.5,-3 L766,460.5" stroke="#fff" stroke-opacity="0.22" stroke-width="1" fill="none"/><text x="513" y="473" font-size="10.3" font-weight="bold" fill="#fff" text-anchor="start">set</text><rect x="535" y="464" width="52" height="11.5" rx="3" fill="#fff" fill-opacity="0.6"/><text x="538" y="474" font-size="11" fill="#000">Clock1</text><path d="M577,468 l4.4,0 l-2.2,2.4 Z" fill="#388e3c"/><text x="592" y="473" font-size="10.3" font-weight="bold" fill="#fff" text-anchor="start">.</text><rect x="598" y="464" width="90" height="11.5" rx="3" fill="#fff" fill-opacity="0.6"/><text x="602" y="474" font-size="11" fill="#000">Timer Enabled</text><path d="M678,468 l4.4,0 l-2.2,2.4 Z" fill="#388e3c"/><text x="696" y="473" font-size="10.3" font-weight="bold" fill="#fff" text-anchor="start">to</text><path d="M736,267 L888,267 L888,286 L736,286 L736,282 C734,279 729,282 729,276 C729,271 734,274 736,271 Z" fill="#8bc34a"/><rect x="740" y="271" width="93" height="11.5" rx="3" fill="#fff" fill-opacity="0.6"/><text x="743" y="280" font-size="11" fill="#000">mobile_textbox</text><path d="M823,275 l4.4,0 l-2.2,2.4 Z" fill="#8bc34a"/><text x="838" y="281" font-size="10.3" font-weight="bold" fill="#fff">.</text><rect x="844" y="271" width="40" height="11.5" rx="3" fill="#fff" fill-opacity="0.6"/><text x="848" y="280" font-size="11" fill="#000">Text</text><path d="M873,275 l4.4,0 l-2.2,2.4 Z" fill="#8bc34a"/><path d="M736,286 L813,286 L813,306 L736,306 L736,301 C734,298 729,301 729,296 C729,290 734,293 736,290 Z" fill="#d81b60"/><text x="744" y="300" font-size="10" font-weight="bold" fill="#fff">“</text><text x="802" y="300" font-size="10" font-weight="bold" fill="#fff">”</text><rect x="751" y="290" width="46" height="11.5" rx="3" fill="#fff" fill-opacity="0.6"/><text x="754" y="300" font-size="11" fill="#000">Number</text><path d="M681,325 L752,325 L752,344 L681,344 L681,340 C680,337 675,340 675,334 C675,329 680,332 681,329 Z" fill="#d81b60"/><text x="689" y="338" font-size="10" font-weight="bold" fill="#fff">“</text><text x="741" y="338" font-size="10" font-weight="bold" fill="#fff">”</text><rect x="696" y="328" width="40" height="11.5" rx="3" fill="#fff" fill-opacity="0.6"/><text x="700" y="338" font-size="11" fill="#000">Mobile</text><path d="M681,344 L834,344 L834,363 L681,363 L681,359 C680,356 675,359 675,353 C675,348 680,351 681,348 Z" fill="#8bc34a"/><rect x="685" y="348" width="93" height="11.5" rx="3" fill="#fff" fill-opacity="0.6"/><text x="689" y="357" font-size="11" fill="#000">mobile_textbox</text><path d="M768,352 l4.4,0 l-2.2,2.4 Z" fill="#8bc34a"/><text x="783" y="358" font-size="10.3" font-weight="bold" fill="#fff">.</text><rect x="790" y="348" width="39" height="11.5" rx="3" fill="#fff" fill-opacity="0.6"/><text x="793" y="357" font-size="11" fill="#000">Text</text><path d="M819,352 l4.4,0 l-2.2,2.4 Z" fill="#8bc34a"/><path d="M738,382 L842,382 L842,401 L738,401 L738,397 C737,395 732,398 732,392 C732,386 737,389 738,387 Z" fill="#d81b60"/><text x="746" y="396" font-size="10" font-weight="bold" fill="#fff">“</text><text x="831" y="396" font-size="10" font-weight="bold" fill="#fff">”</text><rect x="754" y="386" width="73" height="11.5" rx="3" fill="#fff" fill-opacity="0.6"/><text x="757" y="396" font-size="11" fill="#000">Please wait...</text><path d="M738,401 L803,401 L803,421 L738,421 L738,416 C737,414 732,417 732,411 C732,405 737,408 738,406 Z" fill="#d81b60"/><text x="746" y="415" font-size="10" font-weight="bold" fill="#fff">“</text><text x="792" y="415" font-size="10" font-weight="bold" fill="#fff">”</text><rect x="754" y="405" width="34" height="11.5" rx="3" fill="#fff" fill-opacity="0.6"/><text x="757" y="415" font-size="11" fill="#000">Login</text><path d="M738,421 L789,421 L789,441 L738,441 L738,436 C737,433 732,436 732,430 C732,425 737,428 738,425 Z" fill="#43a047"/><rect x="743" y="425" width="42" height="11.5" rx="3" fill="#fff" fill-opacity="0.6"/><text x="746" y="435" font-size="11" fill="#000">false</text><path d="M774,430 l4.4,0 l-2.2,2.4 Z" fill="#43a047"/><path d="M738,441 L779,441 L779,460 L738,460 L738,456 C737,453 732,456 732,450 C732,445 737,448 738,445 Z" fill="#d81b60"/><text x="746" y="454" font-size="10" font-weight="bold" fill="#fff">“</text><text x="768" y="454" font-size="10" font-weight="bold" fill="#fff">”</text><rect x="754" y="445" width="10" height="11.5" rx="3" fill="#fff" fill-opacity="0.6"/><text x="757" y="454" font-size="11" fill="#000"></text><path d="M719,460 L766,460 L766,480 L719,480 L719,475 C718,473 713,476 713,470 C713,464 718,467 719,465 Z" fill="#43a047"/><rect x="723" y="464" width="38" height="11.5" rx="3" fill="#fff" fill-opacity="0.6"/><text x="726" y="474" font-size="11" fill="#000">true</text><path d="M751,468 l4.4,0 l-2.2,2.4 Z" fill="#43a047"/><path d="M942,504 Q942,499 947,499 L1079,499 L1079,518 L993,518 l-4.5,3 l-3,0 l-4.5,-3 L976,518 L976,576 L1079,576 L1079,585 L950,585 Q942,585 942,577 Z" fill="#fba72c"/><text x="950" y="512" font-size="10.3" font-weight="bold" fill="#fff" text-anchor="start">when</text><rect x="983" y="503" width="53" height="11.5" rx="3" fill="#fff" fill-opacity="0.6"/><text x="987" y="512" font-size="11" fill="#000">Clock1</text><path d="M1026,507 l4.4,0 l-2.2,2.4 Z" fill="#fba72c"/><text x="1040" y="512" font-size="10.3" font-weight="bold" fill="#fff" text-anchor="start">.Timer</text><text x="950" y="531" font-size="10.3" font-weight="bold" fill="#fff" text-anchor="start">do</text><path d="M970,523 Q970,518 975,518 L981,518 l4.5,3 l3,0 l4.5,-3 L1236,518 L1236,538 L993,538 l-4.5,3 l-3,0 l-4.5,-3 L970,538 Z" fill="#388e3c"/><path d="M970.5,538 L970.5,523.5 Q970.5,518.5 975.5,518.5 L981.0,518.5 l4.5,3 l3,0 l4.5,-3 L1236,518.5" stroke="#fff" stroke-opacity="0.22" stroke-width="1" fill="none"/><text x="978" y="531" font-size="10.3" font-weight="bold" fill="#fff" text-anchor="start">set</text><rect x="1000" y="522" width="53" height="11.5" rx="3" fill="#fff" fill-opacity="0.6"/><text x="1003" y="532" font-size="11" fill="#000">Clock1</text><path d="M1042,527 l4.4,0 l-2.2,2.4 Z" fill="#388e3c"/><text x="1056" y="531" font-size="10.3" font-weight="bold" fill="#fff" text-anchor="start">.</text><rect x="1064" y="522" width="90" height="11.5" rx="3" fill="#fff" fill-opacity="0.6"/><text x="1067" y="532" font-size="11" fill="#000">Timer Enabled</text><path d="M1144,527 l4.4,0 l-2.2,2.4 Z" fill="#388e3c"/><text x="1161" y="531" font-size="10.3" font-weight="bold" fill="#fff" text-anchor="start">to</text><path d="M1184,518 L1236,518 L1236,538 L1184,538 L1184,533 C1183,531 1178,534 1178,528 C1178,522 1183,525 1184,522 Z" fill="#43a047"/><rect x="1188" y="522" width="43" height="11.5" rx="3" fill="#fff" fill-opacity="0.6"/><text x="1191" y="532" font-size="11" fill="#000">false</text><path d="M1221,527 l4.4,0 l-2.2,2.4 Z" fill="#43a047"/><path d="M970,538 L981,538 l4.5,3 l3,0 l4.5,-3 L1208,538 L1208,557 L993,557 l-4.5,3 l-3,0 l-4.5,-3 L970,557 Z" fill="#5e35b1"/><path d="M970.5,557 L970.5,538.5 L981.0,538.5 l4.5,3 l3,0 l4.5,-3 L1208,538.5" stroke="#fff" stroke-opacity="0.22" stroke-width="1" fill="none"/><text x="978" y="551" font-size="10.3" font-weight="bold" fill="#fff" text-anchor="start">call</text><rect x="1001" y="541" width="61" height="11.5" rx="3" fill="#fff" fill-opacity="0.6"/><text x="1004" y="551" font-size="11" fill="#000">Notifier1</text><path d="M1051,546 l4.4,0 l-2.2,2.4 Z" fill="#5e35b1"/><text x="1066" y="551" font-size="10.3" font-weight="bold" fill="#fff" text-anchor="start">.Dismiss Spinning Progress</text><path d="M970,557 L981,557 l4.5,3 l3,0 l4.5,-3 L1163,557 L1163,576 L975,576 Q970,576 970,571 Z" fill="#ffab00"/><path d="M970.5,576 L970.5,557.5 L981.0,557.5 l4.5,3 l3,0 l4.5,-3 L1163,557.5" stroke="#fff" stroke-opacity="0.22" stroke-width="1" fill="none"/><text x="978" y="570" font-size="10.3" font-weight="bold" fill="#fff" text-anchor="start">open another screen</text><path d="M970,572 Q970,576.5 974,576.5 L1163,576.5" stroke="#fff" stroke-opacity="0.55" stroke-width="1" fill="none"/><text x="1086" y="570" font-size="10.3" font-weight="bold" fill="#fff" text-anchor="start">screenName</text><path d="M1163,557 L1230,557 L1230,576 L1163,576 L1163,572 C1162,569 1156,572 1156,566 C1156,561 1162,564 1163,561 Z" fill="#d81b60"/><text x="1169" y="570" font-size="10" font-weight="bold" fill="#fff">“</text><text x="1220" y="570" font-size="10" font-weight="bold" fill="#fff">”</text><rect x="1178" y="561" width="36" height="11.5" rx="3" fill="#fff" fill-opacity="0.6"/><text x="1182" y="570" font-size="11" fill="#000">Home</text></g></svg>
<svg style="left:1299px;top:213px" width="56" height="56">
<path d="M19.5,7 Q19.5,2.2 24,2.2 Q28.5,2.2 28.5,7" stroke="#0b2a24" stroke-width="2.2" fill="#4db6ac"/>
<path d="M37,10.5 Q51.5,12.5 52,26 L52.3,42.5 Q52.3,46.5 48,47.5 L45,47.5 L44,12Z" fill="#0d3129" stroke="#0b2a24" stroke-width="1.5" stroke-linejoin="round"/>
<path d="M44.5,16 Q48.5,19 48.8,27 L49,43.5 L46.5,44.5Z" fill="#fff"/>
<path d="M26,6 Q43,7.5 45.5,22 L46.5,46 Q46.5,50.5 42,52 L36,52.3 L34,8Z" fill="#4db6ac" stroke="#0b2a24" stroke-width="2" stroke-linejoin="round"/>
<path d="M2.8,46 L2.8,28 Q2.8,5.2 21,5.2 Q38.5,5.2 41,23 L42,46 Q42,52.2 36,52.2 L9,52.2 Q2.8,52.2 2.8,46 Z" stroke="#0b2a24" stroke-width="2.2" fill="#4db6ac"/>
<path d="M11,35.5 Q11,32.6 14,32.6 L31.5,32.6 Q34.4,32.6 34.4,35.5 L34.4,42.6 Q34.4,45.6 31.5,45.6 L14,45.6 Q11,45.6 11,42.6 Z M11,36.8 Q22.7,35.6 34.4,36.8" stroke="#0b2a24" stroke-width="1.6" fill="#4db6ac"/>
</svg>
<svg style="left:1316px;top:512px" width="30" height="88">
<circle cx="14.8" cy="14.5" r="8.3" stroke="#222" stroke-width="1.6" fill="#fff"/>
<circle cx="14.8" cy="14.5" r="2.8" fill="#222"/>
<path d="M14.8,3.2 V6.2 M14.8,22.8 V25.8 M3.5,14.5 H6.5 M23.1,14.5 H26.1" stroke="#222" stroke-width="1.6"/>
<circle cx="14.8" cy="47.4" r="10.8" stroke="#222" stroke-width="1.6" fill="#fff"/>
<path d="M14.8,41.6 V53.2 M9,47.4 H20.6" stroke="#222" stroke-width="1.8"/>
<circle cx="14.8" cy="72.7" r="10.8" stroke="#222" stroke-width="1.6" fill="#fff"/>
<path d="M9,72.7 H20.6" stroke="#222" stroke-width="1.8"/>
</svg>
<svg style="left:1306px;top:614px" width="38" height="48">
<path d="M3,4.5 H34 V9.5 H3Z" fill="#1f1f1f"/>
<path d="M13.5,4.5 Q14,1.5 18.5,1.5 Q23,1.5 23.5,4.5Z" fill="#1f1f1f"/>
<path d="M5,12 H32 V41 Q32,43.5 29.5,43.5 H7.5 Q5,43.5 5,41Z" fill="#1f1f1f"/>
</svg>
<svg style="left:240px;top:600px" width="100" height="62">
<path d="M21.8,4.2 L29.4,11.8 H14.2Z" stroke="#444" stroke-width="1" fill="#ddd"/>
<path d="M21.8,40.5 L29.4,32.5 H14.2Z" stroke="#444" stroke-width="1" fill="#ddd"/>
<path d="M72,4.2 L79.6,11.8 H64.4Z" stroke="#444" stroke-width="1" fill="#ddd"/>
<path d="M72,40.5 L79.6,32.5 H64.4Z" stroke="#444" stroke-width="1" fill="#ddd"/>
<path d="M20,16.6 L26.5,27.5 H13.5Z" fill="#f5ef8a" stroke="#d8d06a" stroke-width=".8" stroke-linejoin="round"/>
<path d="M20,19.5 V24" stroke="#555" stroke-width="1"/><circle cx="20" cy="25.8" r=".6" fill="#555"/>
<circle cx="68.9" cy="23" r="6" fill="#e8585a"/>
<path d="M66,20.1 L71.8,25.9 M71.8,20.1 L66,25.9" stroke="#fff" stroke-width="1.6"/>
</svg>
<div class="t" style="left:269.5px;top:618px;font-size:9.5px;color:#555">0</div>
<div class="t" style="left:317.5px;top:618px;font-size:9.5px;color:#555">0</div>
<div class="a" style="left:242.5px;top:642px;width:91px;height:16px;border:1.5px solid #666;background:#eee"></div>
<div class="t" style="left:253.5px;top:645.5px;font-size:10.00px;color:#444;font-weight:normal;transform:scaleX(0.9904);transform-origin:0 50%;">Show Warnings</div>
<div class="a" style="left:1359px;top:325px;width:7px;height:268.6px;background:#bcbcbc;border-radius:4px 0 0 4px"></div>
<div class="a" style="left:518px;top:674px;width:607px;height:7.8px;background:#cbcbcb;border-radius:4px"></div>
<div class="a" style="left:0;top:687px;width:1366px;height:1px;background:#1e1f22"></div>
<div class="a" style="left:0;top:688px;width:1366px;height:48px;background:#35363a"></div>
<svg style="left:20.0px;top:702px" width="17" height="16">
<rect x="0.5" y="0.5" width="16" height="4.5" fill="#c4314b"/><rect x="0.5" y="5.5" width="16" height="4.8" fill="#3a5bbf"/><rect x="0.5" y="10.8" width="16" height="4.7" fill="#3f9a3a"/>
<rect x="5" y="0.5" width="7" height="15" fill="#e8a23a" opacity=".55"/><rect x="6.2" y="6" width="4.6" height="4" fill="#fff"/>
</svg>
<div class="t" style="left:49.2px;top:706.7px;font-size:12.00px;color:#f1f2f3;font-weight:normal;-webkit-text-stroke:0.2px #f1f2f3;transform:scaleX(0.9697);transform-origin:0 50%;">chat.apk</div>
<svg style="left:200.0px;top:707px" width="14" height="9"><path d="M1.5,7.5 L7,2 L12.5,7.5" stroke="#bdc1c6" stroke-width="1.6" fill="none"/></svg>
<div class="a" style="left:230.0px;top:695px;width:1px;height:35px;background:#5f6368"></div>
<svg style="left:247.7px;top:702px" width="17" height="16">
<rect x="0.5" y="0.5" width="16" height="4.5" fill="#c4314b"/><rect x="0.5" y="5.5" width="16" height="4.8" fill="#3a5bbf"/><rect x="0.5" y="10.8" width="16" height="4.7" fill="#3f9a3a"/>
<rect x="5" y="0.5" width="7" height="15" fill="#e8a23a" opacity=".55"/><rect x="6.2" y="6" width="4.6" height="4" fill="#fff"/>
</svg>
<div class="t" style="left:275.8px;top:706.7px;font-size:12.00px;color:#f1f2f3;font-weight:normal;-webkit-text-stroke:0.2px #f1f2f3;transform:scaleX(0.9697);transform-origin:0 50%;">chat.apk</div>
<svg style="left:427.0px;top:707px" width="14" height="9"><path d="M1.5,7.5 L7,2 L12.5,7.5" stroke="#bdc1c6" stroke-width="1.6" fill="none"/></svg>
<div class="a" style="left:457.5px;top:695px;width:1px;height:35px;background:#5f6368"></div>
<svg style="left:473.5px;top:702px" width="17" height="16">
<rect x="0.5" y="0.5" width="16" height="4.5" fill="#c4314b"/><rect x="0.5" y="5.5" width="16" height="4.8" fill="#3a5bbf"/><rect x="0.5" y="10.8" width="16" height="4.7" fill="#3f9a3a"/>
<rect x="5" y="0.5" width="7" height="15" fill="#e8a23a" opacity=".55"/><rect x="6.2" y="6" width="4.6" height="4" fill="#fff"/>
</svg>
<div class="t" style="left:502.8px;top:706.7px;font-size:12.00px;color:#f1f2f3;font-weight:normal;-webkit-text-stroke:0.2px #f1f2f3;transform:scaleX(0.9697);transform-origin:0 50%;">chat.apk</div>
<svg style="left:654.0px;top:707px" width="14" height="9"><path d="M1.5,7.5 L7,2 L12.5,7.5" stroke="#bdc1c6" stroke-width="1.6" fill="none"/></svg>
<div class="a" style="left:684.6px;top:695px;width:1px;height:35px;background:#5f6368"></div>
<svg style="left:703.0px;top:701px" width="14" height="18">
<path d="M0.5,0.5 H9.5 L13.5,4.5 V17.5 H0.5Z" fill="#fff"/><path d="M9.5,0.5 V4.5 H13.5" fill="#cfd8dc"/>
<rect x="2.5" y="6" width="9" height="6" fill="#1e88e5"/><path d="M3,11.5 L6,8 L8,10 L9.5,8.5 L11,11.5Z" fill="#bbdefb"/>
</svg>
<div class="t" style="left:730.4px;top:706.7px;font-size:12.00px;color:#f1f2f3;font-weight:normal;-webkit-text-stroke:0.2px #f1f2f3;transform:scaleX(0.8990);transform-origin:0 50%;">122633.png</div>
<svg style="left:880.6px;top:707px" width="14" height="9"><path d="M1.5,7.5 L7,2 L12.5,7.5" stroke="#bdc1c6" stroke-width="1.6" fill="none"/></svg>
<div class="a" style="left:911.2px;top:695px;width:1px;height:35px;background:#5f6368"></div>
<svg style="left:928.0px;top:702px" width="17" height="16">
<rect x="0.5" y="0.5" width="16" height="4.5" fill="#c4314b"/><rect x="0.5" y="5.5" width="16" height="4.8" fill="#3a5bbf"/><rect x="0.5" y="10.8" width="16" height="4.7" fill="#3f9a3a"/>
<rect x="5" y="0.5" width="7" height="15" fill="#e8a23a" opacity=".55"/><rect x="6.2" y="6" width="4.6" height="4" fill="#fff"/>
</svg>
<div class="t" style="left:956.5px;top:706.7px;font-size:12.00px;color:#f1f2f3;font-weight:normal;-webkit-text-stroke:0.2px #f1f2f3;transform:scaleX(0.9697);transform-origin:0 50%;">chat.apk</div>
<svg style="left:1107.8px;top:707px" width="14" height="9"><path d="M1.5,7.5 L7,2 L12.5,7.5" stroke="#bdc1c6" stroke-width="1.6" fill="none"/></svg>
<div class="a" style="left:1138.3px;top:695px;width:1px;height:35px;background:#5f6368"></div>
<div class="a" style="left:1253px;top:695.6px;width:76px;height:30.7px;background:#28292c;border-radius:4px"></div>
<div class="t" style="left:1268.0px;top:705.9px;font-size:11.30px;color:#f4f5f6;font-weight:bold;-webkit-text-stroke:0.2px #f4f5f6;transform:scaleX(1.0038);transform-origin:0 50%;">Show all</div>
<svg style="left:1342px;top:705px" width="12" height="12"><path d="M1,1 L11,11 M11,1 L1,11" stroke="#bdc1c6" stroke-width="1.6"/></svg>
<div class="a" style="left:0;top:736px;width:1366px;height:32px;background:#12120c"></div>
<svg style="left:10px;top:743.5px" width="17" height="17"><path d="M0,2.3 L7,1.3 V7.6 H0Z M8,1.15 L16.5,0 V7.6 H8Z M0,8.6 H7 V15 L0,14Z M8,8.6 H16.5 V16.4 L8,15.2Z" fill="#fff"/></svg>
<svg style="left:45px;top:743px" width="18" height="18"><circle cx="9" cy="8.5" r="6.8" stroke="#fff" stroke-width="1.8" fill="none"/></svg>
<svg style="left:81px;top:743px" width="18" height="18"><path d="M1,2.5 H11 M1,15.5 H11 M2,5 H10 V13 H2Z M14,2 V5 M14,7 V10 M14,12 V15.5" stroke="#fff" stroke-width="1.4" fill="none"/></svg>
<div class="a" style="left:114px;top:742px;width:1px;height:19px;background:#666"></div>
<div class="a" style="left:117px;top:742px;width:1px;height:19px;background:#555"></div>
<svg style="left:140px;top:743px" width="18" height="16"><path d="M0.5,1.5 H6 L7.5,3 H16.5 V15 H0.5Z" fill="#f8d775"/><path d="M0.5,4.5 H16.5 V15 H0.5Z" fill="#ffe69a"/><path d="M5,9 H12 V15 H10 V11.5 H7 V15 H5Z" fill="#2d9be0"/></svg>
<svg style="left:178px;top:742.5px" width="17" height="17"><rect x="5" y="0.5" width="11.5" height="16" rx="1" fill="#21a366"/><rect x="10" y="0.5" width="6.5" height="16" fill="#33c481"/><rect x="5" y="11" width="11.5" height="5.5" fill="#107c41"/><rect x="0.5" y="3.5" width="9.5" height="10" rx="1" fill="#185c37"/><path d="M3,6 L7.5,11 M7.5,6 L3,11" stroke="#fff" stroke-width="1.4"/></svg>
<svg style="left:214.5px;top:742.5px" width="17" height="17"><circle cx="8.5" cy="8.5" r="8" fill="#fb8c3a"/><path d="M8.5,0.5 A8,8 0 0 1 16.5,8.5 L8.5,8.5Z" fill="#7b5ccc"/><circle cx="8.5" cy="8.5" r="4.6" fill="#fff"/><path d="M6.3,6.5 Q8.5,5 10.7,6.5 V9 Q10.5,11 8.5,12 Q6.5,11 6.3,9Z" fill="#3a3a8a"/></svg>
<div class="a" style="left:242px;top:736px;width:36px;height:32px;background:#45443d"></div>
<div class="a" style="left:242px;top:764px;width:36px;height:2px;background:#5fd3cf"></div>
<svg style="left:252px;top:742.5px" width="16" height="16"><circle cx="8" cy="8" r="7.5" fill="#db4437"/><path d="M8,8 L1.5,4.25 A7.5,7.5 0 0 0 8,15.5 Z" fill="#0f9d58"/><path d="M8,8 L8,15.5 A7.5,7.5 0 0 0 14.5,4.25 Z" fill="#f4b400"/><path d="M8,8 L14.5,4.25 L8,4.25Z" fill="#db4437"/><circle cx="8" cy="8" r="3.6" fill="#fff"/><circle cx="8" cy="8" r="2.8" fill="#4285f4"/></svg>
<svg style="left:290px;top:742.5px" width="16" height="17"><rect x="1" y="0.5" width="14" height="16" rx="1" fill="#f9ba00"/><circle cx="8" cy="7" r="3.3" stroke="#fff" stroke-width="1.2" fill="none"/><path d="M6.5,10.5 H9.5 M7,12.5 H9" stroke="#fff" stroke-width="1.1"/></svg>
<svg style="left:325px;top:742.5px" width="17" height="17"><rect x="0.5" y="0.5" width="16" height="16" fill="#2b3a42"/><path d="M4,5 L13,8 L4,11Z" fill="#6ac6c2"/></svg>
<svg style="left:362px;top:742px" width="17" height="18"><path d="M6,1 H11 L16,16 H1Z" fill="#f08c1a"/><path d="M4.5,7 H12.5 M3,11.5 H14" stroke="#fff" stroke-width="1.6"/><rect x="0.5" y="15" width="16" height="2.5" fill="#f08c1a"/></svg>
<svg style="left:399px;top:742.5px" width="17" height="17"><rect x="0.5" y="0.5" width="16" height="16" fill="#001d34" stroke="#31a8ff" stroke-width="1"/><text x="2.5" y="12" font-size="8.5" font-weight="bold" fill="#31a8ff" font-family="Liberation Sans">Ps</text></svg>
<svg style="left:436px;top:742.5px" width="17" height="17"><circle cx="8.5" cy="8" r="7.5" fill="#3ddc84"/><circle cx="8.5" cy="8" r="5" fill="#15140f"/><path d="M5,13 L8.5,4 L12,13" stroke="#c9e6d4" stroke-width="1.6" fill="none"/></svg>
<svg style="left:474px;top:742.5px" width="17" height="17"><circle cx="8.5" cy="8.5" r="8" fill="#1b9de2"/><path d="M3,11 Q3,5 9,5 Q14,5 14,9 Q11,7.5 8,9 Q6,11 9.5,13.5 Q4.5,14 3,11Z" fill="#35c1f1"/><path d="M9,16.5 Q14,16 16.3,11 Q12,13 9.5,13 Q7,12.5 7,10Z" fill="#0c59a4"/></svg>
<svg style="left:511px;top:742px" width="17" height="17"><path d="M1,5 L8.5,1 L16,5 L8.5,9Z" fill="#e63a2e"/><path d="M1,8 L8.5,4 L16,8 L8.5,12Z" fill="#fbc02d"/><path d="M1,11 L8.5,7 L16,11 L8.5,15Z" fill="#43a047"/><path d="M1,11 L8.5,15 L16,11 V12.5 L8.5,16.5 L1,12.5Z" fill="#1565c0"/></svg>
<div class="a" style="left:505px;top:764px;width:28px;height:2px;background:#5fd3cf"></div>
<svg style="left:1016px;top:741px" width="22" height="22"><circle cx="9.5" cy="9.5" r="8.5" fill="#2e8ae6" stroke="#fff" stroke-width="1"/><text x="5.5" y="14.5" font-size="13" font-weight="bold" fill="#fff" font-family="Liberation Sans">?</text><circle cx="16" cy="16" r="4" fill="#f0a30a"/><path d="M16,14 V18" stroke="#fff" stroke-width="1.2"/></svg>
<svg style="left:1052px;top:743px" width="18" height="17"><circle cx="6" cy="8" r="3" stroke="#fff" stroke-width="1.2" fill="none"/><path d="M1,16 Q1,11.5 6,11.5 Q9,11.5 10.5,14" stroke="#fff" stroke-width="1.2" fill="none"/><circle cx="12" cy="4.5" r="2.8" stroke="#fff" stroke-width="1.2" fill="none"/><path d="M9,9.5 Q10,7.5 12,7.5 Q16.5,7.5 16.5,12" stroke="#fff" stroke-width="1.2" fill="none"/></svg>
<svg style="left:1084px;top:748px" width="13" height="8"><path d="M1,7 L6.5,1.5 L12,7" stroke="#fff" stroke-width="1.3" fill="none"/></svg>
<svg style="left:1106px;top:743px" width="18" height="17"><path d="M1,6 H4 L8,2 V15 L4,11 H1Z" stroke="#fff" stroke-width="1.1" fill="none"/><path d="M10.5,5.5 Q12,8.5 10.5,11.5 M12.8,3.5 Q15.5,8.5 12.8,13.5" stroke="#fff" stroke-width="1.1" fill="none"/></svg>
<svg style="left:1129px;top:744px" width="19" height="15"><path d="M1,5 H3.5 M1,10 H3.5 M3.5,3 Q7,3 7,7.5 Q7,12 3.5,12" stroke="#fff" stroke-width="1.1" fill="none"/><rect x="8" y="3" width="10" height="9" stroke="#fff" stroke-width="1.1" fill="none"/></svg>
<svg style="left:1155px;top:743px" width="18" height="17"><path d="M2,15 Q2,6 11,3 M5,15 Q5,9 11,6.5 M8,15 Q8,12 11,10" stroke="#fff" stroke-width="1.2" fill="none"/><circle cx="12" cy="14" r="1.6" fill="#fff"/></svg>
<svg style="left:1180px;top:744px" width="22" height="15"><rect x="0.5" y="1.5" width="21" height="12" stroke="#fff" stroke-width="1.1" fill="none"/><path d="M3,4.5 H19 M3,7.5 H19 M5,10.5 H17" stroke="#fff" stroke-width="1" stroke-dasharray="1.2,1.3"/></svg>
<div class="t" style="left:1212.5px;top:747.0px;font-size:11.00px;color:#fff;font-weight:normal;-webkit-text-stroke:0.2px #fff;transform:scaleX(0.9856);transform-origin:0 50%;">ENG</div>
<div class="t" style="left:1265.0px;top:738.0px;font-size:11.00px;color:#fff;font-weight:normal;-webkit-text-stroke:0.2px #fff;transform:scaleX(0.9444);transform-origin:0 50%;">10:03</div>
<div class="t" style="left:1249.7px;top:754.0px;font-size:11.00px;color:#fff;font-weight:normal;-webkit-text-stroke:0.2px #fff;transform:scaleX(1.0128);transform-origin:0 50%;">18-07-2020</div>
<svg style="left:1324px;top:743.5px" width="18" height="17"><path d="M0.5,0.5 H16.5 V12 H10.5 L8.5,15.5 L6.5,12 H0.5Z" fill="#fff"/><path d="M3,3.5 H13 M3,6 H13 M3,8.5 H9" stroke="#15140f" stroke-width="1"/></svg>
<div class="a" style="left:1361px;top:736px;width:1px;height:32px;background:#777"></div></body></html>
